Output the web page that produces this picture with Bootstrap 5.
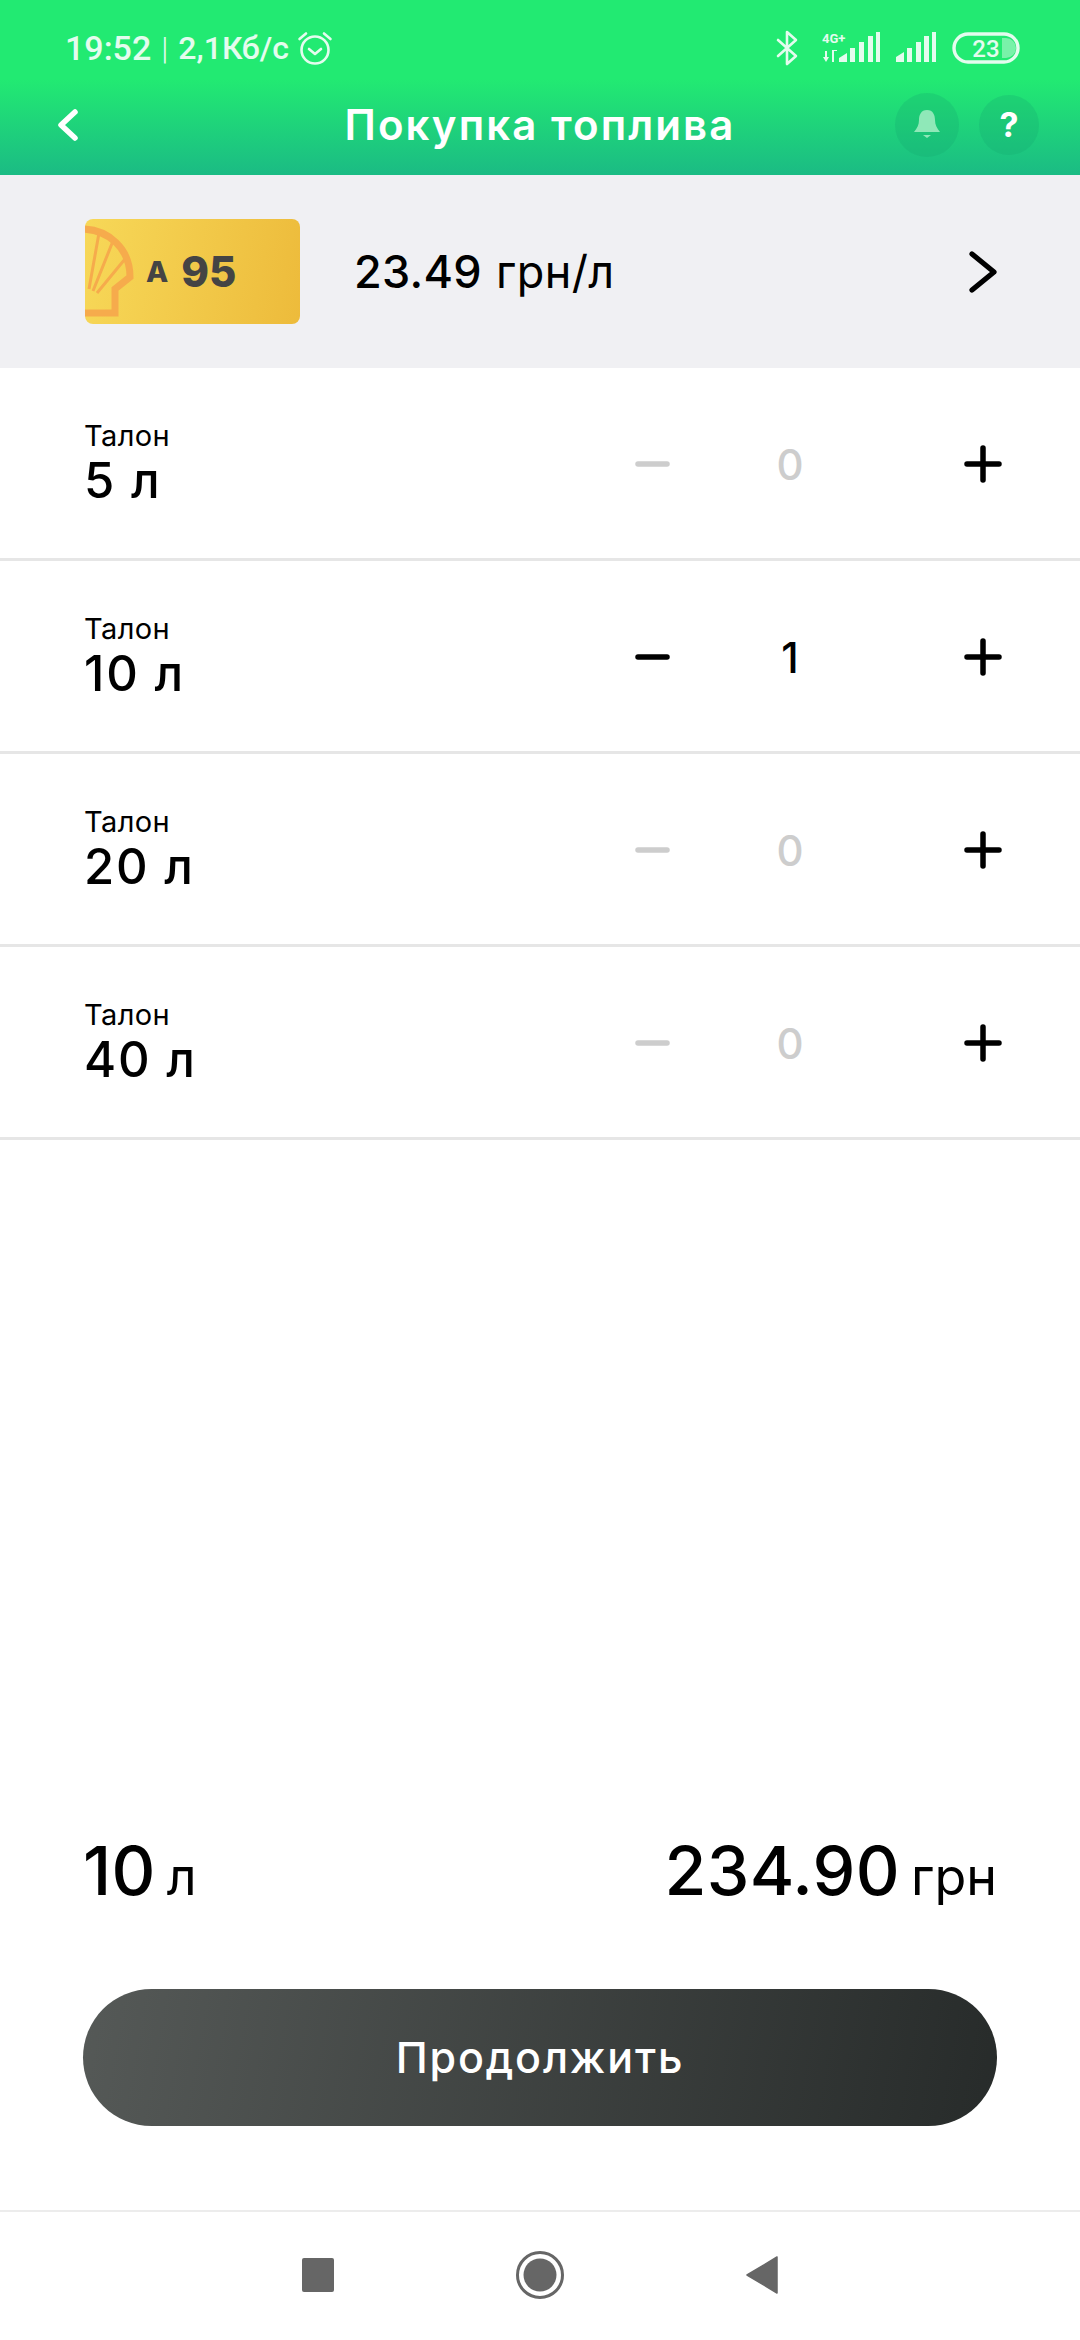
<!DOCTYPE html>
<html lang="en">
<head>
    <meta charset="UTF-8">
    <meta name="viewport" content="width=device-width, initial-scale=1.0">
    <link href="https://cdn.jsdelivr.net/npm/bootstrap@5.3.3/dist/css/bootstrap.min.css" rel="stylesheet">
    <title>Покупка топлива</title>
    <style>
        body {
            height: 2340px;
            font-family: Inter, "Liberation Sans", sans-serif;
            color: #000;
            background-color: #fff;
        }
        .app-head {
            height: 175px;
            background: linear-gradient(180deg, #22ea72 0%, #22ea72 45%, #1bbb84 100%);
            color: #fff;
        }
        .status-line {
            height: 96px;
            padding: 0 60px 0 65px;
            color: #e4fcee;
            font-family: Roboto, sans-serif;
            font-weight: 500;
            font-size: 32px;
        }
        .status-time { font-size: 34px; }
        .status-sep {
            font-weight: 300;
            margin: 0 10px 0 10px;
        }
        .title-line {
            display: grid;
            grid-template-columns: 1fr auto 1fr;
            padding: 0 41px;
            height: 79px;
            margin-top: -11px;
        }
        .back-icon { margin-left: 16px; }
        .title-text {
            font-size: 42px;
            font-weight: 600;
            letter-spacing: 2.1px;
        }
        .head-btns { gap: 20px; }
        .head-round {
            border-radius: 50%;
            background-color: rgba(20, 170, 110, .28);
        }
        .fuel-line {
            height: 193px;
            padding: 0 83px 0 85px;
            background-color: #f0f0f3;
        }
        .fuel-card {
            width: 215px;
            height: 105px;
            border-radius: 8px;
            background: linear-gradient(100deg, #f7d858 0%, #edbb3b 100%);
            overflow: hidden;
            color: #444;
            font-weight: 800;
        }
        .fuel-a { font-size: 29px; margin-left: 61px; line-height: 1; }
        .fuel-num { font-size: 42px; margin-left: 13px; line-height: 1; }
        .fuel-price {
            margin-left: 54px;
            font-size: 45px;
            letter-spacing: .3px;
        }
        .fuel-sum { font-weight: 500; }
        .fuel-unit { font-weight: 400; margin-left: 1px; letter-spacing: .4px; }
        .qty-line {
            height: 193px;
            padding: 2px 78px 0 84px;
            border-bottom: 3px solid #e6e6e6;
        }
        .qty-label { font-size: 29px; line-height: 34px; letter-spacing: .4px; }
        .qty-value { font-size: 49px; line-height: 56px; font-weight: 500; letter-spacing: 1.8px; }
        .qty-count {
            width: 100px;
            margin: 0 124px 0 69px;
            font-size: 42px;
            font-weight: 500;
            text-align: center;
        }
        .qty-off { color: #cdcdcd; }
        .sum-line {
            padding: 0 83px;
            margin-bottom: 61px;
            line-height: 78px;
        }
        .sum-big { font-size: 68px; font-weight: 500; letter-spacing: .3px; }
        .sum-small { font-size: 52px; margin-left: 11px; }
        .go-btn {
            display: block;
            margin: 0 83px 84px;
            height: 137px;
            width: 914px;
            border: 0;
            background: linear-gradient(100deg, #555957 0%, #272b2a 100%);
            color: #fff;
            font-size: 43px;
            font-weight: 500;
            letter-spacing: 1.8px;
        }
        .go-btn:hover { color: #fff; }
        .nav-line {
            height: 130px;
            border-top: 2px solid #ececec;
            gap: 182px;
            padding-bottom: 2px;
        }
    </style>
</head>
<body class="d-flex flex-column">
    <header class="app-head">
        <div class="status-line d-flex align-items-center">
            <span class="status-time">19:52</span><span class="status-sep">|</span><span>2,1Кб/с</span>
            <!-- alarm -->
            <svg class="ms-2" width="36" height="36" viewBox="0 0 36 36" fill="none" stroke="#e4fcee" stroke-width="2.6" stroke-linecap="round" stroke-linejoin="round">
                <circle cx="18" cy="20" r="13.5"/>
                <path d="M12 19l6 5 6-5M2.5 9L9 3.5M33.5 9L27 3.5"/>
            </svg>
            <div class="ms-auto d-flex align-items-center">
                <!-- bluetooth -->
                <svg width="22" height="36" viewBox="0 0 22 36" fill="none" stroke="#e4fcee" stroke-width="2.6" stroke-linejoin="round" stroke-linecap="round">
                    <path d="M2 10l18 16-9 8V2l9 8L2 26"/>
                </svg>
                <!-- 4G+ signal -->
                <svg class="ms-4" width="58" height="32" viewBox="0 0 58 32" fill="#e4fcee">
                    <text x="0" y="11" font-family="Roboto, sans-serif" font-size="13" font-weight="700">4G+</text>
                    <path d="M3 19h2v6h2l-3 5-3-5h2zM10 30h2v-11h3v-1h-5z"/>
                    <path d="M17 30v-4l8-5v9zM28 30V16h5v14zM37 30V10h5v20zM46 30V4h5v26zM54 30V0h4v30z"/>
                </svg>
                <!-- signal -->
                <svg class="ms-3" width="40" height="32" viewBox="0 0 40 32" fill="#e4fcee">
                    <path d="M0 30v-5l8-5v10zM11 30V16h5v14zM20 30V10h5v20zM28 30V4h5v26zM36 30V0h4v30z"/>
                </svg>
                <!-- battery -->
                <svg class="ms-3" width="68" height="32" viewBox="0 0 68 32">
                    <rect x="2" y="2" width="64" height="28" rx="14" fill="none" stroke="#e4fcee" stroke-width="3.4"/>
                    <path d="M50 6h4a10 10 0 0 1 0 20h-4z" fill="#e4fcee" opacity=".45"/>
                    <text x="34" y="25" text-anchor="middle" font-family="Roboto, sans-serif" font-size="24" font-weight="500" fill="#e4fcee">23</text>
                </svg>
            </div>
        </div>
        <div class="title-line align-items-center">
            <svg class="back-icon" width="22" height="34" viewBox="0 0 22 34" fill="none" stroke="#fff" stroke-width="5.5" stroke-linecap="round" stroke-linejoin="round">
                <path d="M18 4L4 17l14 13"/>
            </svg>
            <div class="title-text">Покупка топлива</div>
            <div class="head-btns d-flex justify-content-end align-items-center">
                <div class="head-round d-flex align-items-center justify-content-center" style="width:64px;height:64px">
                    <svg width="28" height="32" viewBox="0 0 28 32" fill="#8fe8b8">
                        <path d="M14 1c6 0 8 5 8 10 0 5 2 8 5 12H1c3-4 5-7 5-12C6 6 8 1 14 1zM10 26h8l-4 3z"/>
                    </svg>
                </div>
                <div class="head-round d-flex align-items-center justify-content-center fw-bold" style="width:60px;height:60px;font-size:34px">?</div>
            </div>
        </div>
    </header>

    <section class="fuel-line d-flex align-items-center">
        <div class="fuel-card d-flex align-items-center position-relative">
            <svg class="position-absolute top-0 start-0" width="50" height="105" viewBox="0 0 50 105" fill="none" stroke="#f6ab4c">
                <path d="M-4 10C24 10 45 30 45 58L30 70V94H-4" stroke-width="7"/>
                <path d="M4 70L14 14M8 72L28 22M12 74L40 40" stroke-width="3"/>
            </svg>
            <span class="fuel-a">A</span><span class="fuel-num">95</span>
        </div>
        <div class="fuel-price"><span class="fuel-sum">23.49</span> <span class="fuel-unit">грн/л</span></div>
        <svg class="ms-auto" width="28" height="42" viewBox="0 0 28 42" fill="none" stroke="#000" stroke-width="5.2" stroke-linecap="round" stroke-linejoin="round">
            <path d="M3 3l22 18L3 39"/>
        </svg>
    </section>

    <main class="flex-grow-1">
        <div class="qty-line d-flex align-items-center">
            <div class="me-auto">
                <div class="qty-label">Талон</div>
                <div class="qty-value">5 л</div>
            </div>
            <svg width="38" height="38" viewBox="0 0 38 38" stroke="#cdcdcd" stroke-width="5.5" stroke-linecap="round"><path d="M5 19h29"/></svg>
            <div class="qty-count qty-off">0</div>
            <svg width="38" height="38" viewBox="0 0 38 38" stroke="#000" stroke-width="5.5" stroke-linecap="round"><path d="M3 19h32M19 3v32"/></svg>
        </div>
        <div class="qty-line d-flex align-items-center">
            <div class="me-auto">
                <div class="qty-label">Талон</div>
                <div class="qty-value">10 л</div>
            </div>
            <svg width="38" height="38" viewBox="0 0 38 38" stroke="#000" stroke-width="5.5" stroke-linecap="round"><path d="M5 19h29"/></svg>
            <div class="qty-count">1</div>
            <svg width="38" height="38" viewBox="0 0 38 38" stroke="#000" stroke-width="5.5" stroke-linecap="round"><path d="M3 19h32M19 3v32"/></svg>
        </div>
        <div class="qty-line d-flex align-items-center">
            <div class="me-auto">
                <div class="qty-label">Талон</div>
                <div class="qty-value">20 л</div>
            </div>
            <svg width="38" height="38" viewBox="0 0 38 38" stroke="#cdcdcd" stroke-width="5.5" stroke-linecap="round"><path d="M5 19h29"/></svg>
            <div class="qty-count qty-off">0</div>
            <svg width="38" height="38" viewBox="0 0 38 38" stroke="#000" stroke-width="5.5" stroke-linecap="round"><path d="M3 19h32M19 3v32"/></svg>
        </div>
        <div class="qty-line d-flex align-items-center">
            <div class="me-auto">
                <div class="qty-label">Талон</div>
                <div class="qty-value">40 л</div>
            </div>
            <svg width="38" height="38" viewBox="0 0 38 38" stroke="#cdcdcd" stroke-width="5.5" stroke-linecap="round"><path d="M5 19h29"/></svg>
            <div class="qty-count qty-off">0</div>
            <svg width="38" height="38" viewBox="0 0 38 38" stroke="#000" stroke-width="5.5" stroke-linecap="round"><path d="M3 19h32M19 3v32"/></svg>
        </div>
    </main>

    <div class="sum-line d-flex justify-content-between align-items-baseline">
        <div><span class="sum-big">10</span><span class="sum-small">л</span></div>
        <div><span class="sum-big">234.90</span><span class="sum-small">грн</span></div>
    </div>
    <button class="btn go-btn rounded-pill">Продолжить</button>

    <nav class="nav-line d-flex align-items-center justify-content-center">
        <svg width="32" height="34" viewBox="0 0 32 34" fill="#666"><rect width="32" height="34" rx="2"/></svg>
        <svg width="48" height="48" viewBox="0 0 48 48"><circle cx="24" cy="24" r="22.5" fill="none" stroke="#666" stroke-width="3"/><circle cx="24" cy="24" r="16.5" fill="#666"/></svg>
        <svg width="32" height="38" viewBox="0 0 32 38" fill="#666"><path d="M31 1v36L1 19z" stroke="#666" stroke-width="1.5" stroke-linejoin="round"/></svg>
    </nav>
</body>
</html>
